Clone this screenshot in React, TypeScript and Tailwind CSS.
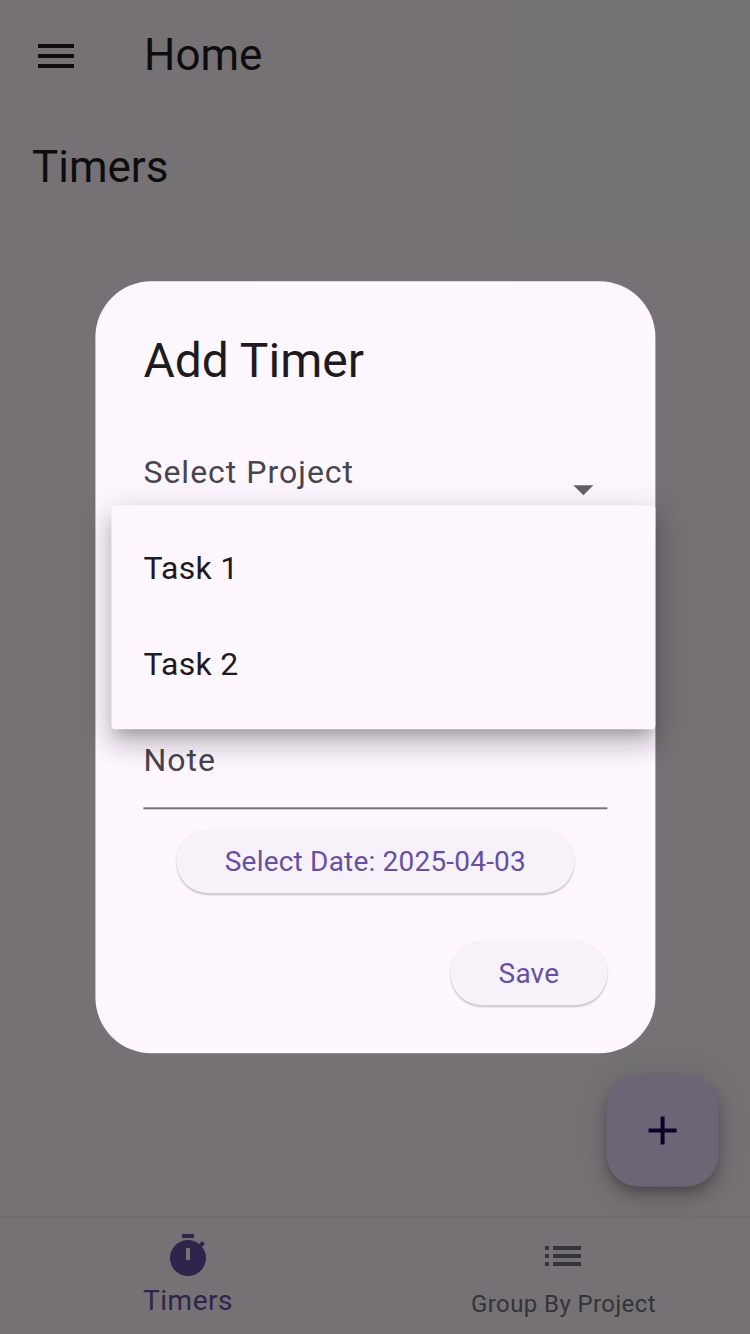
import React from "react";

type IconProps = { d: string; className: string };

function Icon({ d, className }: IconProps) {
  return (
    <svg viewBox="0 0 24 24" fill="currentColor" fillRule="evenodd" className={className}>
      <path d={d} />
    </svg>
  );
}

const MENU = "M3 18h18v-2H3v2zm0-5h18v-2H3v2zm0-7v2h18V6H3z";
const ADD = "M19 13h-6v6h-2v-6H5v-2h6V5h2v6h6v2z";
const TIMER =
  "M15 1H9v2h6V1zM19.03 7.39l1.42-1.42c-.43-.51-.9-.99-1.41-1.41l-1.42 1.42C16.07 4.74 14.12 4 12 4c-4.97 0-9 4.03-9 9s4.02 9 9 9 9-4.03 9-9c0-2.12-.74-4.07-1.97-5.61zM13 14h-2V8h2v6z";
const LIST =
  "M3 13h2v-2H3v2zm0 4h2v-2H3v2zm0-8h2V7H3v2zm4 4h14v-2H7v2zm0 4h14v-2H7v2zM7 7v2h14V7H7z";
const ARROW = "M7 10l5 5 5-5z";

function HomePage() {
  return (
    <div className="flex h-full flex-col bg-[#fef7ff] text-[#1d1b20]">
      <header className="flex h-28 shrink-0 items-center pl-8">
        <Icon d={MENU} className="size-12" />
        <h1 className="-mt-0.5 ml-16 text-[44px] leading-[56px]">Home</h1>
      </header>
      <main className="flex flex-1 flex-col px-8 pt-[27px]">
        <h2 className="text-[44px] leading-[56px]">Timers</h2>
        <button className="mt-auto mr-[-1px] mb-[31px] flex size-28 -translate-x-[0.4px] -translate-y-[0.5px] items-center justify-center self-end rounded-[32px] bg-[#eaddff] text-[#21005d] shadow-[0_6px_10px_-2px_rgba(0,0,0,0.2),0_12px_20px_rgba(0,0,0,0.14),0_2px_36px_rgba(0,0,0,0.12)]">
          <Icon d={ADD} className="size-12" />
        </button>
      </main>
      <nav className="flex h-[116px] shrink-0 bg-[#fef7ff] shadow-[0_-1px_4px_rgba(0,0,0,0.1)]">
        <div className="flex flex-1 flex-col items-center pt-[14px] text-[#6750a4]">
          <Icon d={TIMER} className="size-12" />
          <span className="mt-[3px] pl-px text-[28px] leading-9 tracking-[0.5px]">Timers</span>
        </div>
        <div className="flex flex-1 flex-col items-center pt-[14px] text-[#75727a]">
          <Icon d={LIST} className="size-12" />
          <span className="mt-2 pl-0.5 text-2xl leading-8 tracking-[0.4px]">Group By Project</span>
        </div>
      </nav>
    </div>
  );
}

function AddTimerDialog() {
  return (
    <div className="relative flex h-[772px] w-[560px] translate-x-[0.4px] translate-y-[0.3px] flex-col rounded-[56px] bg-[#fef7ff] px-12 pt-12 text-[#1d1b20]">
      <h2 className="text-5xl leading-[64px]">Add Timer</h2>
      <div className="mt-8 flex h-28 items-center justify-between text-[#49454f]">
        <span className="-mt-[18px] text-[32px] leading-[48px] tracking-[1px]">Select Project</span>
        <Icon d={ARROW} className="mt-4 size-12 text-[#616161]" />
      </div>
      <div className="mt-[176px] h-24 border-b-2 border-[#79747e] pt-[23px] text-[32px] leading-[48px] tracking-[1px] text-[#49454f]">
        Note
      </div>
      <button className="mt-5 h-16 w-[398px] self-center rounded-full bg-[#f7f2fa] pt-px text-[28px] tracking-[0.2px] text-[#6750a4] shadow-[0_2px_2px_rgba(0,0,0,0.2),0_0_2px_rgba(0,0,0,0.06)]">
        Select Date: 2025-04-03
      </button>
      <button className="mt-12 h-16 w-[157px] self-end rounded-full bg-[#f7f2fa] pt-px text-[28px] tracking-[0.2px] text-[#6750a4] shadow-[0_2px_2px_rgba(0,0,0,0.2),0_0_2px_rgba(0,0,0,0.06)]">
        Save
      </button>
      <ul className="absolute top-[224px] left-4 w-[544px] rounded bg-[#fef7ff] px-8 pt-[15px] pb-[17px] text-[32px] tracking-[0.3px] shadow-[0_10px_12px_-6px_rgba(0,0,0,0.2),0_16px_24px_2px_rgba(0,0,0,0.14),0_6px_33px_4px_rgba(0,0,0,0.12)]">
        <li className="flex h-24 items-center">Task 1</li>
        <li className="flex h-24 items-center">Task 2</li>
      </ul>
    </div>
  );
}

export default function App() {
  return (
    <div className="relative h-[1334px] w-[750px] overflow-hidden font-['Roboto',sans-serif]">
      <HomePage />
      <div className="absolute inset-0 flex items-center justify-center bg-black/54">
        <AddTimerDialog />
      </div>
    </div>
  );
}
